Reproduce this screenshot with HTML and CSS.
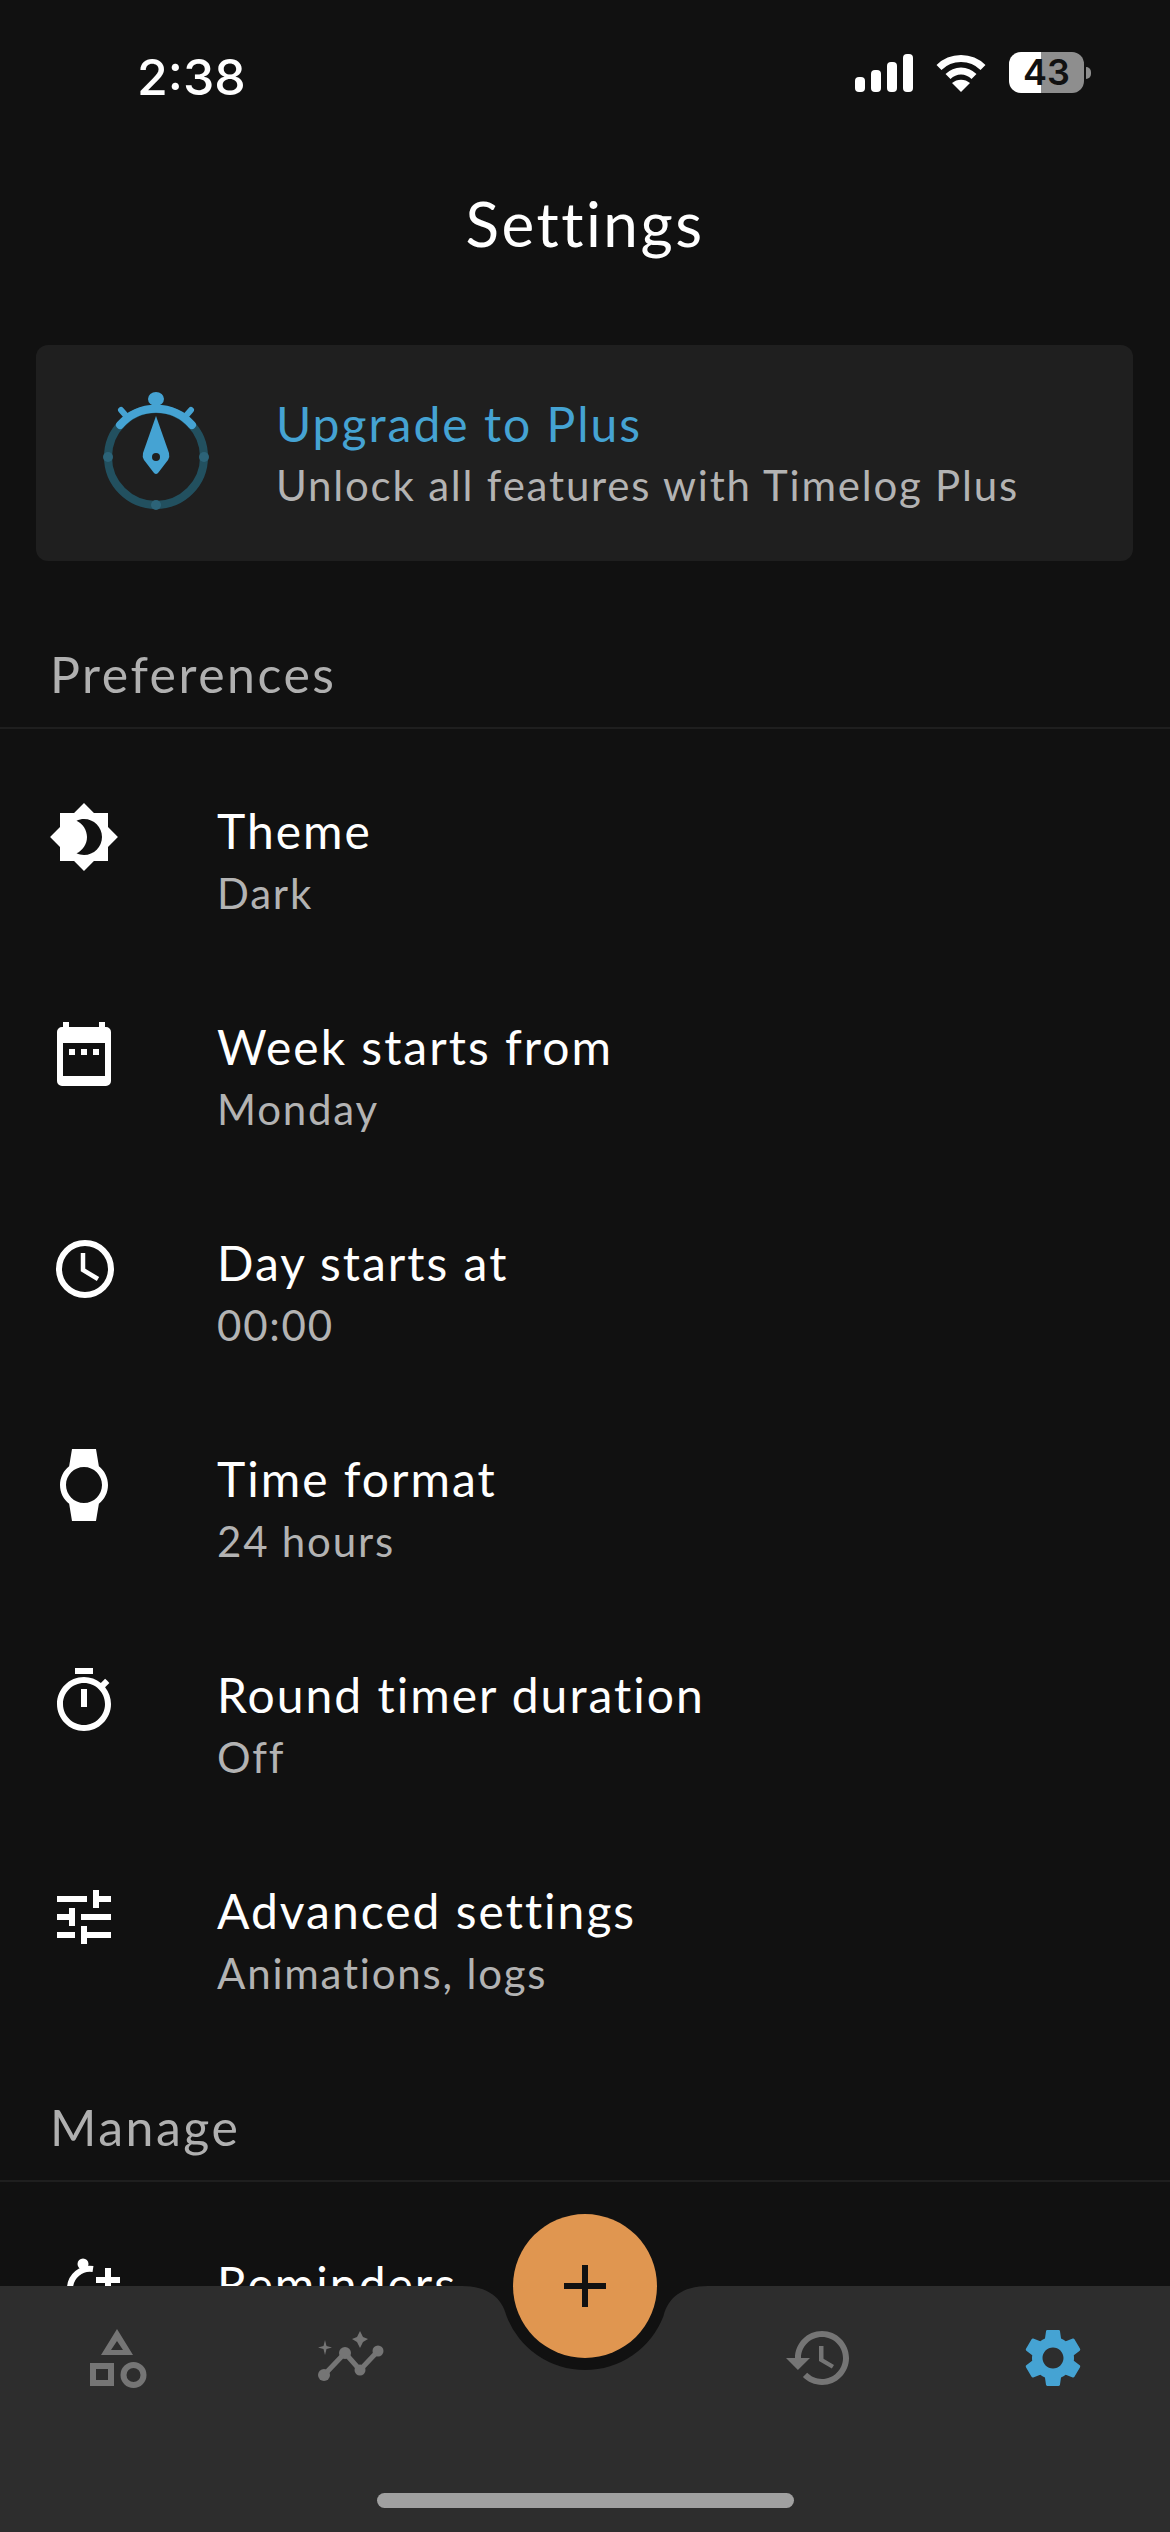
FILE: index.html
```html
<!DOCTYPE html>
<html lang="en">
  <head>
    <meta charset="UTF-8" />
    <title>Settings</title>
    <link rel="stylesheet" href="styles.css">
  </head>
  <body>
    <div class="app">
      <div class="scroll">
        <div class="status-bar">
          <span class="clock">2:38</span>
          <div class="status-icons">
            <svg class="signal" width="58" height="38" viewBox="0 0 58 38" fill="#fff">
              <rect x="0" y="23" width="10" height="15" rx="4" />
              <rect x="16" y="16" width="10" height="22" rx="4" />
              <rect x="32" y="8" width="10" height="30" rx="4" />
              <rect x="48" y="0" width="10" height="38" rx="4" />
            </svg>
            <svg class="wifi" width="50" height="38" viewBox="0 0 50 38" fill="none" stroke="#fff" stroke-width="7">
              <path d="M3 13.5C15 1.5 35 1.5 47 13.5" />
              <path d="M12 22.5C19.5 15 30.5 15 38 22.5" />
              <path d="M25 38L16 29C21 24.5 29 24.5 34 29Z" fill="#fff" stroke="none" />
            </svg>
            <div class="battery"><span>43</span></div>
            <div class="battery-nub"></div>
          </div>
        </div>

        <h1 class="page-title">Settings</h1>

        <div class="upgrade-card">
          <svg class="upgrade-icon" width="120" height="130" viewBox="96 390 120 130">
            <circle cx="156" cy="459" r="48" fill="none" stroke="#22505f" stroke-width="8" />
            <circle cx="108" cy="459" r="5" fill="#2c6378" />
            <circle cx="204" cy="459" r="5" fill="#2c6378" />
            <circle cx="156" cy="507" r="5" fill="#2c6378" />
            <path d="M120 427A48 48 0 0 1 192 427" fill="none" stroke="#45a3d3" stroke-width="8" stroke-linecap="round" />
            <ellipse cx="156" cy="401" rx="8" ry="7" fill="#45a3d3" />
            <rect x="153" y="404" width="6" height="10" fill="#45a3d3" />
            <path d="M121 412L128 420M191 412L184 420" stroke="#45a3d3" stroke-width="6" stroke-linecap="round" />
            <path d="M156 418L169 455Q170 459 168 462L158 475Q156 477 154 475L144 462Q142 459 143 455Z" fill="#45a3d3" />
            <circle cx="156" cy="459" r="4" fill="#1f1f1f" />
          </svg>
          <div class="upgrade-text">
            <div class="upgrade-title">Upgrade to Plus</div>
            <div class="upgrade-sub">Unlock all features with Timelog Plus</div>
          </div>
        </div>

        <div class="section-label first">Preferences</div>

        <div class="row">
          <svg class="row-icon" viewBox="0 0 24 24"><path d="M20 8.69V4h-4.69L12 .69 8.69 4H4v4.69L.69 12 4 15.31V20h4.69L12 23.31 15.31 20H20v-4.69L23.31 12 20 8.69zM12 18c-.89 0-1.74-.2-2.5-.55C11.56 16.5 13 14.42 13 12s-1.44-4.5-3.5-5.45C10.26 6.2 11.11 6 12 6c3.31 0 6 2.69 6 6s-2.69 6-6 6z" /></svg>
          <div><div class="row-title">Theme</div><div class="row-sub">Dark</div></div>
        </div>
        <div class="row">
          <svg class="row-icon" viewBox="0 0 72 72">
            <path fill-rule="evenodd" d="M15 10h-1a5 5 0 0 0 -5 5v49a5 5 0 0 0 5 5h44a5 5 0 0 0 5 -5V15a5 5 0 0 0 -5 -5h-1V5h-6v5H21V5h-6zM15 26h42v33H15z" />
            <rect x="21" y="32" width="6" height="6" /><rect x="33" y="32" width="6" height="6" /><rect x="45" y="32" width="6" height="6" />
          </svg>
          <div><div class="row-title">Week starts from</div><div class="row-sub">Monday</div></div>
        </div>
        <div class="row">
          <svg class="row-icon" viewBox="0 0 72 72">
            <circle cx="37" cy="36" r="26" fill="none" stroke="#fff" stroke-width="6" />
            <path d="M35 20V37L50 46" fill="none" stroke="#fff" stroke-width="4.5" />
          </svg>
          <div><div class="row-title">Day starts at</div><div class="row-sub">00:00</div></div>
        </div>
        <div class="row">
          <svg class="row-icon" viewBox="0 0 24 24"><path d="M20 12c0-2.54-1.19-4.81-3.04-6.27L16 0H8l-.95 5.73C5.19 7.19 4 9.45 4 12s1.19 4.81 3.05 6.27L8 24h8l.96-5.73C18.81 16.81 20 14.54 20 12zM6 12c0-3.31 2.69-6 6-6s6 2.69 6 6-2.69 6-6 6-6-2.69-6-6z" /></svg>
          <div><div class="row-title">Time format</div><div class="row-sub">24 hours</div></div>
        </div>
        <div class="row">
          <svg class="row-icon" viewBox="0 0 24 24"><path d="M9 1h6v2H9zm10.03 6.39l1.42-1.42c-.43-.51-.9-.99-1.41-1.41l-1.42 1.42C16.07 4.74 14.12 4 12 4c-4.97 0-9 4.03-9 9s4.02 9 9 9 9-4.03 9-9c0-2.12-.74-4.07-1.97-5.61zM12 20c-3.87 0-7-3.13-7-7s3.13-7 7-7 7 3.13 7 7-3.13 7-7 7zm-1-12h2v6h-2z" /></svg>
          <div><div class="row-title">Round timer duration</div><div class="row-sub">Off</div></div>
        </div>
        <div class="row">
          <svg class="row-icon" viewBox="0 0 24 24"><path d="M3 17v2h6v-2H3zM3 5v2h10V5H3zm10 16v-2h8v-2h-8v-2h-2v6h2zM7 9v2H3v2h4v2h2V9H7zm14 4v-2H11v2h10zm-6-4h2V7h4V5h-4V3h-2v6z" /></svg>
          <div><div class="row-title">Advanced settings</div><div class="row-sub">Animations, logs</div></div>
        </div>

        <div class="section-label">Manage</div>

        <div class="row">
          <svg class="row-icon" viewBox="0 0 72 72">
            <circle cx="35" cy="10" r="5.5" />
            <path d="M45 15A20 20 0 0 0 22 34V44" fill="none" stroke="#fff" stroke-width="6" />
            <rect x="57" y="14" width="6" height="24" /><rect x="48" y="23" width="24" height="6" />
          </svg>
          <div><div class="row-title">Reminders</div></div>
        </div>
      </div>

      <div class="tab-bar">
        <svg class="notch" width="1170" height="90" viewBox="0 0 1170 90">
          <path d="M462 0C488 0 502 12 506.5 30A84 84 0 0 0 663.5 30C668 12 682 0 708 0Z" />
        </svg>
        <div class="fab"><svg width="42" height="42" viewBox="0 0 42 42"><path d="M21 0V42M0 21H42" stroke="#111" stroke-width="6" /></svg></div>
        <div class="tabs">
          <div class="tab">
            <svg width="60" height="60" viewBox="0 0 60 60" fill="none" stroke="#757575">
              <path fill="#757575" stroke="none" fill-rule="evenodd" d="M30 1L46 27H14ZM30 13L24 22H36Z" />
              <rect x="6" y="38" width="18" height="17" stroke-width="6" />
              <circle cx="46.500" cy="47" r="10" stroke-width="6" />
            </svg>
          </div>
          <div class="tab">
            <svg width="72" height="60" viewBox="0 0 72 60" fill="#757575">
              <path d="M9 47L30 25L45 42L63 23" fill="none" stroke="#757575" stroke-width="5" />
              <circle cx="9" cy="47" r="6" /><circle cx="30" cy="25" r="6" /><circle cx="45" cy="42" r="5.500" /><circle cx="63" cy="23" r="5.500" />
              <path d="M45 3L48 9L53 11L48 14L45 20L42 14L37 11L42 9Z" />
              <path d="M10 12L11.500 18L17 19.500L11.500 21L10 27L8.500 21L3 19.500L8.500 18Z" />
            </svg>
          </div>
          <div class="tab"></div>
          <div class="tab">
            <svg width="72" height="72" viewBox="0 0 24 24" fill="#757575"><path d="M13 3c-4.97 0-9 4.03-9 9H1l3.89 3.89.07.14L9 12H6c0-3.87 3.13-7 7-7s7 3.13 7 7-3.13 7-7 7c-1.93 0-3.68-.79-4.94-2.06l-1.42 1.42C8.27 19.99 10.51 21 13 21c4.97 0 9-4.03 9-9s-4.03-9-9-9zm-1 5v5l4.28 2.54.72-1.21-3.5-2.08V8H12z" /></svg>
          </div>
          <div class="tab">
            <svg width="70" height="70" viewBox="0 0 24 24" fill="#45a3d3"><path d="M19.14 12.94c.04-.3.06-.61.06-.94 0-.32-.02-.64-.07-.94l2.03-1.58c.18-.14.23-.41.12-.61l-1.92-3.32c-.12-.22-.37-.29-.59-.22l-2.39.96c-.5-.38-1.03-.7-1.62-.94l-.36-2.54c-.04-.24-.24-.41-.48-.41h-3.84c-.24 0-.43.17-.47.41l-.36 2.54c-.59.24-1.13.57-1.62.94l-2.39-.96c-.22-.08-.47 0-.59.22L2.74 8.87c-.12.21-.08.47.12.61l2.03 1.58c-.05.3-.09.63-.09.94s.02.64.07.94l-2.03 1.58c-.18.14-.23.41-.12.61l1.92 3.32c.12.22.37.29.59.22l2.39-.96c.5.38 1.03.7 1.62.94l.36 2.54c.05.24.24.41.48.41h3.84c.24 0 .44-.17.47-.41l.36-2.54c.59-.24 1.13-.56 1.62-.94l2.39.96c.22.08.47 0 .59-.22l1.92-3.32c.12-.22.07-.47-.12-.61l-2.01-1.58zM12 15.6c-1.98 0-3.6-1.62-3.6-3.6s1.62-3.6 3.6-3.6 3.6 1.62 3.6 3.6-1.62 3.6-3.6 3.6z" /></svg>
          </div>
        </div>
        <div class="home-indicator"></div>
      </div>
    </div>
  </body>
</html>
```

FILE: styles.css
```css
* {
  box-sizing: border-box;
}

body {
  margin: 0;
  background-color: #111111;
  color: #ffffff;
  font-family: "Lato", "Open Sans", sans-serif;
}

.app {
  width: 1170px;
  height: 2532px;
  display: flex;
  flex-direction: column;
  overflow: hidden;
}

.scroll {
  flex: 1;
  min-height: 0;
  overflow: hidden;
}

.status-bar {
  height: 154px;
  padding: 52px 79px 0 137px;
  display: flex;
  justify-content: space-between;
  align-items: flex-start;
}

.clock {
  font-family: "Inter", sans-serif;
  font-size: 50px;
  font-weight: 500;
  line-height: 50px;
}

.status-icons {
  display: flex;
  align-items: center;
}

.signal {
  margin-right: 23px;
}

.wifi {
  margin-right: 23px;
}

.battery {
  width: 75px;
  height: 41px;
  border-radius: 12px;
  background: linear-gradient(to right, #ffffff 43%, #8e8e8e 43%);
  color: #111111;
  font-family: "Inter", sans-serif;
  font-size: 36px;
  font-weight: 600;
  line-height: 41px;
  text-align: center;
}

.battery-nub {
  width: 5px;
  height: 12px;
  margin-left: 2px;
  border-radius: 0 6px 6px 0;
  background-color: #8e8e8e;
}

.page-title {
  height: 142px;
  margin: 0;
  font-size: 62px;
  font-weight: 400;
  line-height: 138px;
  letter-spacing: 2.5px;
  text-align: center;
}

.upgrade-card {
  height: 216px;
  margin: 49px 37px 0 36px;
  padding-left: 60px;
  display: flex;
  align-items: center;
  gap: 60px;
  background-color: #1f1f1f;
  border-radius: 12px;
}

.upgrade-text {
  padding-top: 2px;
}

.upgrade-title {
  color: #45a3d3;
  font-size: 48px;
  line-height: 62px;
  letter-spacing: 2px;
}

.upgrade-sub {
  color: #b3b3b3;
  font-size: 42px;
  line-height: 60px;
  letter-spacing: 1.8px;
}

.section-label {
  height: 157px;
  padding: 72px 0 0 50px;
  border-bottom: 2px solid #1f1f1f;
  color: #b0b0b0;
  font-size: 50px;
  line-height: 60px;
  letter-spacing: 2.5px;
}

.section-label.first {
  height: 168px;
  padding-top: 83px;
}

.row {
  height: 216px;
  padding: 72px 0 0 48px;
  display: flex;
  align-items: flex-start;
  gap: 97px;
}

.row-icon {
  width: 72px;
  height: 72px;
  flex-shrink: 0;
  fill: #ffffff;
}

.row-title {
  font-size: 48px;
  line-height: 60px;
  letter-spacing: 2px;
}

.row-sub {
  color: #b3b3b3;
  font-size: 42px;
  line-height: 64px;
  letter-spacing: 1.8px;
}

.tab-bar {
  position: relative;
  height: 246px;
  background-color: #2d2d2d;
}

.notch {
  position: absolute;
  top: 0;
  left: 0;
  fill: #111111;
}

.fab {
  position: absolute;
  top: -72px;
  left: 513px;
  width: 144px;
  height: 144px;
  display: flex;
  align-items: center;
  justify-content: center;
  border-radius: 50%;
  background-color: #e09650;
}

.tabs {
  height: 144px;
  display: grid;
  grid-template-columns: repeat(5, 234px);
}

.tab {
  display: flex;
  align-items: center;
  justify-content: center;
}

.home-indicator {
  width: 417px;
  height: 15px;
  margin: 63px auto 0;
  border-radius: 8px;
  background-color: #a0a0a0;
}
```
